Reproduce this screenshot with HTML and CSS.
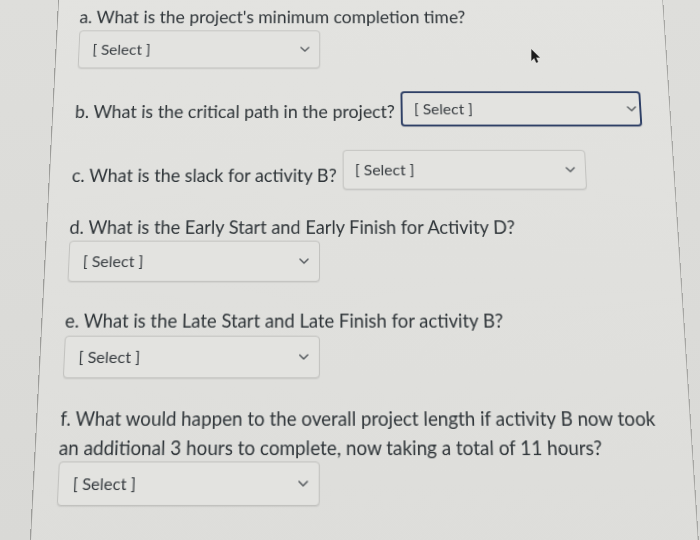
FILE: index.html
```html
<!DOCTYPE html>
<html lang="en">
<head>
<meta charset="utf-8">
<title>Quiz</title>
<link rel="stylesheet" href="styles.css">
</head>
<body>
<div class="card">
  <div class="q">
    <p class="qt">a. What is the project's minimum completion time?</p>
    <div class="select"><span>[ Select ]</span><svg class="chev" width="10" height="6" viewBox="0 0 10 6"><path d="M1 1 L5 5 L9 1"/></svg></div>
  </div>
  <div class="q">
    <p class="qt">b. What is the critical path in the project? <span class="select inline focus lift-sm"><span>[ Select ]</span><svg class="chev" width="10" height="6" viewBox="0 0 10 6"><path d="M1 1 L5 5 L9 1"/></svg></span></p>
  </div>
  <div class="q">
    <p class="qt">c. What is the slack for activity B? <span class="select inline lift-md"><span>[ Select ]</span><svg class="chev" width="10" height="6" viewBox="0 0 10 6"><path d="M1 1 L5 5 L9 1"/></svg></span></p>
  </div>
  <div class="q">
    <p class="qt">d. What is the Early Start and Early Finish for Activity D?</p>
    <div class="select"><span>[ Select ]</span><svg class="chev" width="10" height="6" viewBox="0 0 10 6"><path d="M1 1 L5 5 L9 1"/></svg></div>
  </div>
  <div class="q">
    <p class="qt">e. What is the Late Start and Late Finish for activity B?</p>
    <div class="select"><span>[ Select ]</span><svg class="chev" width="10" height="6" viewBox="0 0 10 6"><path d="M1 1 L5 5 L9 1"/></svg></div>
  </div>
  <div class="q">
    <p class="qt">f. What would happen to the overall project length if activity B now took<br>an additional 3 hours to complete, now taking a total of 11 hours?</p>
    <div class="select"><span>[ Select ]</span><svg class="chev" width="10" height="6" viewBox="0 0 10 6"><path d="M1 1 L5 5 L9 1"/></svg></div>
  </div>
</div>
<svg class="cursor" width="10" height="15" viewBox="0 0 10 15"><path d="M0.5 0.5 L0.5 11.5 L3.2 9 L5.3 13.6 L7 12.9 L5 8.4 L8.6 8.4 Z"/></svg>
</body>
</html>
```

FILE: styles.css
```css
html, body {
  margin: 0;
  height: 100%;
  overflow: hidden;
}

body {
  background: linear-gradient(180deg, #dededb 0%, #d9d9d6 100%);
  font-family: Lato, "Open Sans", sans-serif;
  color: #2e3438;
}

.card {
  margin-left: 43.5px;
  width: 636.5px;
  height: 700px;
  box-sizing: border-box;
  border-left: 1px solid #9c9c99;
  border-right: 1px solid #a6a6a3;
  background: linear-gradient(180deg, #e3e3e0 0%, #dfdfdc 60%, #dcdcd9 100%);
  padding: 26px 0 0 22.5px;
  transform-origin: 281.5px 310px;
  transform: translateY(-40px) perspective(1000px) rotateX(10.5deg);
}

.q {
  margin-bottom: 25px;
}

.q:last-child .select {
  margin-top: -2px;
}

.qt {
  margin: 0;
  font-size: 18.3px;
  line-height: 28.5px;
}

.select {
  display: flex;
  align-items: center;
  justify-content: space-between;
  box-sizing: border-box;
  width: 252px;
  height: 42px;
  padding: 0 10px 0 14px;
  border: 1px solid #c2c2bf;
  border-radius: 4px;
  background: #e3e3e0;
  box-shadow: 0 1px 1px rgba(0, 0, 0, 0.07);
  font-size: 16px;
  line-height: 20px;
  color: #383d41;
}

.select.inline {
  display: inline-flex;
  vertical-align: baseline;
  width: 248px;
  margin-left: 1px;
  padding-left: 12px;
}

.select.lift-sm {
  vertical-align: 4px;
}

.select.lift-md {
  vertical-align: 7px;
}

.select.focus {
  height: 38px;
  border: 2px solid #2f4066;
  padding-right: 3px;
}

.chev {
  flex: none;
}

.chev path {
  fill: none;
  stroke: #575c60;
  stroke-width: 1.5;
  stroke-linecap: round;
  stroke-linejoin: round;
}

.cursor {
  position: fixed;
  left: 531px;
  top: 49px;
}

.cursor path {
  fill: #1c1c1c;
  stroke: #444;
  stroke-width: 0.5;
}
```
